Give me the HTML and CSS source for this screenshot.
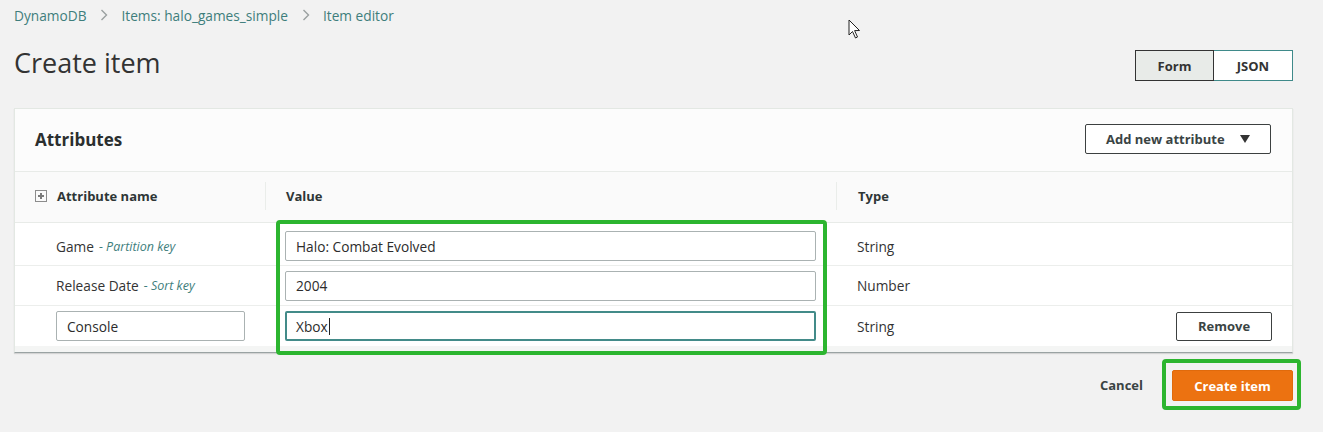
FILE: index.html
```html
<!DOCTYPE html>
<html lang="en">
<head>
<meta charset="utf-8">
<title>Create item</title>
<link rel="stylesheet" href="styles.css">
</head>
<body>
<div class="page">
  <nav class="crumbs">
    <a class="crumb">DynamoDB</a>
    <span class="sep"><svg width="8" height="12" viewBox="0 0 8 12"><path d="M1.5 1 L6.5 6 L1.5 11" fill="none" stroke="#9aa0a0" stroke-width="1.4"/></svg></span>
    <a class="crumb">Items: halo_games_simple</a>
    <span class="sep"><svg width="8" height="12" viewBox="0 0 8 12"><path d="M1.5 1 L6.5 6 L1.5 11" fill="none" stroke="#9aa0a0" stroke-width="1.4"/></svg></span>
    <span class="crumb">Item editor</span>
  </nav>

  <div class="title-row">
    <h1 class="title">Create item</h1>
    <div class="toggle">
      <button class="seg seg-on">Form</button>
      <button class="seg seg-off">JSON</button>
    </div>
  </div>

  <section class="panel">
    <header class="panel-head">
      <h2 class="panel-title">Attributes</h2>
      <button class="btn add-btn">Add new attribute <span class="tri"></span></button>
    </header>
    <div class="table">
      <div class="row head">
        <div class="cell c1"><span class="plus-box"></span><span class="th">Attribute name</span></div>
        <div class="cell c2"><span class="th">Value</span></div>
        <div class="cell c3"><span class="th">Type</span></div>
      </div>
      <div class="row r1">
        <div class="cell c1"><span class="name">Game</span><span class="key">- Partition key</span></div>
        <div class="cell c2"><div class="field">Halo: Combat Evolved</div></div>
        <div class="cell c3"><span class="type">String</span></div>
      </div>
      <div class="row">
        <div class="cell c1"><span class="name">Release Date</span><span class="key">- Sort key</span></div>
        <div class="cell c2"><div class="field">2004</div></div>
        <div class="cell c3"><span class="type">Number</span></div>
      </div>
      <div class="row last">
        <div class="cell c1"><div class="field name-field">Console</div></div>
        <div class="cell c2"><div class="field focused">Xbox<span class="caret"></span></div></div>
        <div class="cell c3 spread"><span class="type">String</span><button class="btn remove-btn">Remove</button></div>
      </div>
      <div class="table-foot"></div>
      <div class="highlight value-hl"></div>
    </div>
  </section>

  <div class="actions">
    <button class="link-btn">Cancel</button>
    <div class="hl-wrap"><button class="primary">Create item</button></div>
  </div>

  <svg class="cursor" width="14" height="22" viewBox="0 0 14 22"><path d="M1 1 L1 16 L4.5 12.5 L7.5 19 L9.5 18 L6.6 11.6 L11.5 11.5 Z" fill="#fff" stroke="#222" stroke-width="1"/></svg>
</div>
</body>
</html>
```

FILE: styles.css
```css
* { box-sizing: border-box; }
html, body { margin: 0; padding: 0; }
body {
  background: #f2f2f2;
  font-family: "Open Sans", "Noto Sans", sans-serif;
  color: #333;
  width: 1323px;
  height: 432px;
  overflow: hidden;
}
.page {
  position: relative;
  padding: 0 30px 0 14px;
}
.crumbs {
  display: flex;
  align-items: center;
  height: 30px;
  font-size: 13.7px;
}
.crumb { color: #3e7e7c; text-decoration: none; }
.sep { display: inline-flex; margin: 0 13px 0 14px; }

.title-row {
  display: flex;
  justify-content: space-between;
  align-items: center;
  margin-top: 20px;
  height: 31px;
}
.title {
  margin: 0;
  font-size: 27px;
  font-weight: 400;
  line-height: 31px;
  color: #333;
  position: relative;
  top: -3px;
}
.toggle { display: flex; }
.seg {
  font-family: inherit;
  font-size: 13px;
  font-weight: 700;
  color: #333;
  width: 79px;
  height: 31px;
  padding: 0;
  border-radius: 0;
}
.seg-on { background: #e8ebe8; border: 1px solid #333; }
.seg-off { background: #fff; border: 1px solid #3f8a8a; border-left: none; }

.panel {
  margin-top: 27px;
  background: #fcfcfc;
  border: 1px solid #e3e8e3;
  border-bottom: 1px solid #9aa3a3;
  box-shadow: 0 1px 1px rgba(0,0,0,0.12);
}
.panel-head {
  display: flex;
  justify-content: space-between;
  align-items: center;
  height: 63px;
  padding: 0 20px;
  border-bottom: 1px solid #e8ebe8;
}
.panel-title {
  margin: 0;
  font-size: 17px;
  font-weight: 700;
  color: #2b2f2f;
  position: relative;
  top: -1px;
}
.btn {
  font-family: inherit;
  font-size: 13px;
  font-weight: 700;
  color: #3a4444;
  background: #fff;
  border: 1px solid #3c4040;
  border-radius: 2px;
  padding: 0;
}
.add-btn {
  width: 186px;
  height: 30px;
  display: flex;
  align-items: center;
  padding-left: 20px;
  gap: 15px;
  position: relative;
  top: -1px;
  left: -1px;
}
.tri {
  width: 0; height: 0;
  border-left: 5px solid transparent;
  border-right: 5px solid transparent;
  border-top: 8px solid #333;
}

.table { position: relative; }
.row {
  display: grid;
  grid-template-columns: 250px 571px 1fr;
  background: #fff;
  border-bottom: 1px solid #eceeec;
  height: 40px;
  align-items: center;
}
.row.head {
  height: 51px;
  background: #fafafa;
  border-bottom: 1px solid #e8ebe8;
  padding-bottom: 2px;
}
.row.r1 { height: 43px; padding-top: 4px; }
.row.last { border-bottom: none; }
.cell { display: flex; align-items: center; height: 100%; }
.head .cell { height: 28px; }
.head .c2, .head .c3 { border-left: 1px solid #eaedea; }
.c1 { padding-left: 41px; padding-right: 20px; }
.head .c1 { padding-left: 20px; }
.c2 { padding: 0 20px; }
.c3 { padding: 0 20px 0 21px; }
.spread { justify-content: space-between; }
.th { font-size: 13px; font-weight: 700; color: #2e3636; }
.plus-box {
  width: 12px; height: 12px;
  border: 1px solid #8c8c8c;
  margin-right: 10px;
  position: relative;
}
.plus-box::before, .plus-box::after {
  content: "";
  position: absolute;
  background: #7a7a7a;
}
.plus-box::before { left: 2px; top: 4px; width: 6px; height: 2px; }
.plus-box::after { left: 4px; top: 2px; width: 2px; height: 6px; }
.name { font-size: 13.7px; color: #333; }
.key { font-size: 12.5px; font-style: italic; color: #3e7e7c; margin-left: 5px; }
.type { font-size: 13.7px; color: #333; }
.field {
  width: 100%;
  height: 30px;
  border: 1px solid #aab2b2;
  border-radius: 2px;
  background: #fff;
  font-size: 13.7px;
  color: #2c2c2c;
  padding: 0 10px;
  display: flex;
  align-items: center;
}
.name-field { width: 189px; }
.field.focused {
  border: 2px solid #438b89;
  padding-left: 9px;
}
.caret {
  display: inline-block;
  width: 1px;
  height: 17px;
  background: #222;
  margin-left: 1px;
}
.remove-btn { width: 96px; height: 29px; }
.table-foot { height: 6px; background: #f4f5f4; }

.highlight {
  position: absolute;
  left: 261px;
  top: 48px;
  width: 551px;
  height: 135px;
  border: 4px solid #2cb52f;
  border-radius: 4px;
  pointer-events: none;
}

.actions {
  display: flex;
  justify-content: flex-end;
  align-items: center;
  margin-top: 6px;
  margin-right: -8px;
}
.link-btn {
  font-family: inherit;
  font-size: 13px;
  font-weight: 700;
  color: #3a4444;
  background: none;
  border: none;
  padding: 0;
  margin-right: 19px;
  margin-top: 1px;
}
.hl-wrap {
  border: 4px solid #2cb52f;
  border-radius: 4px;
  padding: 7px 4px 5px 6px;
}
.primary {
  display: block;
  font-family: inherit;
  font-size: 13px;
  font-weight: 700;
  color: #fff;
  background: #ec7211;
  border: 1px solid #e06a0c;
  border-radius: 2px;
  width: 121px;
  height: 31px;
  padding: 0;
}
.cursor {
  position: absolute;
  left: 848px;
  top: 19px;
}
```
